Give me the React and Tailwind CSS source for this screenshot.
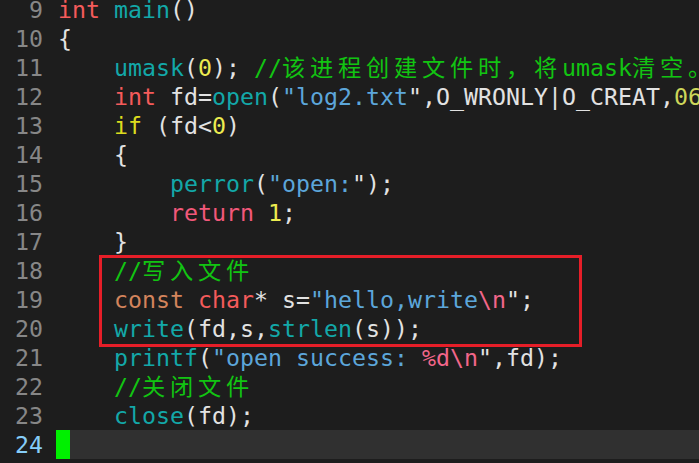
import React from 'react';

// colour per token kind (vim-ish scheme)
const C = {
  t: 'text-[#f45b5b]', // type
  f: 'text-[#13a8a8]', // function call
  p: 'text-[#e2e2e2]', // plain
  n: 'text-[#ecec50]', // number
  k: 'text-[#dcdc1e]', // if
  r: 'text-[#f2587a]', // return
  c: 'text-[#d3845c]', // const
  s: 'text-[#5ca6da]', // string
  m: 'text-[#12c412]', // comment
  e: 'text-[#f2668a]', // escape
  o: 'text-[#cdd65a]', // octal
};

const lines = [
  { no: 9, toks: [['t', 'int'], ['p', ' '], ['f', 'main'], ['p', '()']] },
  { no: 10, toks: [['p', '{']] },
  { no: 11, toks: [['p', '    '], ['f', 'umask'], ['p', '('], ['n', '0'], ['p', '); '], ['m', '//该进程创建文件时，将umask清空。']] },
  { no: 12, toks: [['p', '    '], ['t', 'int'], ['p', ' fd='], ['f', 'open'], ['p', '('], ['s', '"log2.txt'], ['p', '",O_WRONLY|O_CREAT,'], ['o', '0666'], ['p', ');']] },
  { no: 13, toks: [['p', '    '], ['k', 'if'], ['p', ' (fd<'], ['n', '0'], ['p', ')']] },
  { no: 14, toks: [['p', '    {']] },
  { no: 15, toks: [['p', '        '], ['f', 'perror'], ['p', '('], ['s', '"open:'], ['p', '");']] },
  { no: 16, toks: [['p', '        '], ['r', 'return'], ['p', ' '], ['n', '1'], ['p', ';']] },
  { no: 17, toks: [['p', '    }']] },
  { no: 18, toks: [['p', '    '], ['m', '//写入文件']] },
  { no: 19, toks: [['p', '    '], ['c', 'const'], ['p', ' '], ['t', 'char'], ['p', '* s='], ['s', '"hello,write'], ['e', '\\n'], ['p', '";']] },
  { no: 20, toks: [['p', '    '], ['f', 'write'], ['p', '(fd,s,'], ['f', 'strlen'], ['p', '(s));']] },
  { no: 21, toks: [['p', '    '], ['f', 'printf'], ['p', '('], ['s', '"open success: '], ['e', '%d\\n'], ['p', '",fd);']] },
  { no: 22, toks: [['p', '    '], ['m', '//关闭文件']] },
  { no: 23, toks: [['p', '    '], ['f', 'close'], ['p', '(fd);']] },
];

const wide = /[\u3000-\u9fff\uff00-\uffef]/;

// CJK glyphs take two terminal cells
const Cells = ({ text }) =>
  text.split('').map((ch, i) =>
    wide.test(ch) ? (
      <span key={i} className="inline-block w-[28px]">{ch}</span>
    ) : (
      ch
    )
  );

const Line = ({ no, toks }) => (
  <div className="flex h-[29px]">
    <div className="w-[43px] text-right text-[#878787]">{no}</div>
    <div className="w-[13px]" />
    <div className="whitespace-pre pl-[2px]">
      {toks.map(([k, t], i) => (
        <span key={i} className={C[k]}>
          <Cells text={t} />
        </span>
      ))}
    </div>
  </div>
);

export default function App() {
  return (
    <div className="relative w-[699px] h-[463px] overflow-hidden bg-[#1d1d1d] flex font-['DejaVu_Sans_Mono','Noto_Sans_CJK_SC',monospace] text-[23.25px] leading-[29px]">
      <div className="w-[2px] bg-[#0e0e0e]" />
      <div className="flex-1 -mt-[5px]">
        {lines.map((l) => (
          <Line key={l.no} {...l} />
        ))}
        <div className="flex h-[29px]">
          <div className="w-[43px] text-right text-[#86cdf8]">24</div>
          <div className="w-[13px]" />
          <div className="flex-1 bg-[#303030]">
            <div className="w-[14px] h-full bg-[#00f000]" />
          </div>
        </div>
      </div>
      <div className="absolute left-[99px] top-[255px] w-[483px] h-[92px] border-[3px] border-[#e61e28]" />
    </div>
  );
}
